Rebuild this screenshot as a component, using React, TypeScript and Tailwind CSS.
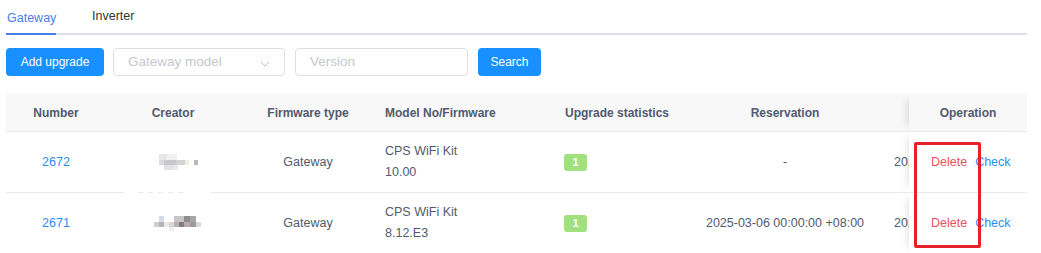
import React from 'react';

const font = { fontFamily: '"Liberation Sans", Arial, sans-serif' };

type Row = {
  id: string;
  model: string;
  firmware: string;
  reservation: string;
  mosaic: 'light' | 'dark';
};

const rows: Row[] = [
  { id: '2672', model: 'CPS WiFi Kit', firmware: '10.00', reservation: '-', mosaic: 'light' },
  { id: '2671', model: 'CPS WiFi Kit', firmware: '8.12.E3', reservation: '2025-03-06 00:00:00 +08:00', mosaic: 'dark' },
];

// blurred creator name, drawn as mosaic blocks
function Mosaic({ kind }: { kind: 'light' | 'dark' }) {
  if (kind === 'light') {
    return (
      <div className="flex flex-col gap-0">
        <div className="flex">
          <div className="w-[8px] h-[6px] bg-[#e6e6e8]" />
          <div className="w-[10px] h-[6px] bg-[#f1f1f1]" />
        </div>
        <div className="flex items-center">
          <div className="w-[5px] h-[5px] bg-[#dcdcdc]" />
          <div className="w-[12px] h-[5px] bg-[#c9c9cc]" />
          <div className="w-[9px] h-[5px] bg-[#d4d4d4]" />
          <div className="w-[4px] h-[5px] bg-[#f0ede4]" />
          <div className="w-[5px] h-[5px] bg-white" />
          <div className="w-[4px] h-[5px] bg-[#b8b8b8]" />
        </div>
        <div className="flex">
          <div className="w-[5px] h-[5px] bg-white" />
          <div className="w-[9px] h-[5px] bg-[#e2e2e4]" />
          <div className="w-[5px] h-[5px] bg-[#eaeaea]" />
        </div>
      </div>
    );
  }
  return (
    <div className="flex flex-col">
      <div className="flex">
        <div className="w-[5px] h-[6px] bg-white" />
        <div className="w-[5px] h-[6px] bg-[#d5dbe6]" />
        <div className="w-[10px] h-[6px] bg-white" />
        <div className="w-[10px] h-[6px] bg-[#c9c6c6]" />
        <div className="w-[6px] h-[6px] bg-[#8d8c93]" />
        <div className="w-[6px] h-[6px] bg-[#a8a5a8]" />
      </div>
      <div className="flex">
        <div className="w-[5px] h-[5px] bg-[#cfcfcf]" />
        <div className="w-[5px] h-[5px] bg-[#b4b4b4]" />
        <div className="w-[5px] h-[5px] bg-[#e9e9e9]" />
        <div className="w-[5px] h-[5px] bg-[#d8d4d0]" />
        <div className="w-[5px] h-[5px] bg-[#b7b3b3]" />
        <div className="w-[5px] h-[5px] bg-[#7f7e84]" />
        <div className="w-[6px] h-[5px] bg-[#b9aca8]" />
        <div className="w-[6px] h-[5px] bg-[#9c9a9f]" />
        <div className="w-[5px] h-[5px] bg-[#d9d9d9]" />
      </div>
      <div className="flex">
        <div className="w-[15px] h-[4px] bg-white" />
        <div className="w-[5px] h-[4px] bg-[#eeeeee]" />
      </div>
    </div>
  );
}

export default function App() {
  return (
    <div className="relative w-[1041px] h-[253px] bg-white overflow-hidden text-[#515a6e]" style={font}>
      <div className="pl-[6px] w-[1027px]">
        {/* Tabs */}
        <div className="flex items-end h-[35px] border-b-2 border-[#dde0ea]">
          <div className="w-[50px] h-[35px] -mb-[2px] border-b-2 border-[#4a7de8] text-[#4a7de8] text-[12.5px] pl-[1px] pt-[9px]">
            Gateway
          </div>
          <div className="ml-[36px] h-[35px] text-[12.5px] text-[#333] pt-[9px]">Inverter</div>
        </div>

        {/* Toolbar */}
        <div className="flex items-center mt-[13px] h-[28px]">
          <button className="w-[98px] h-[28px] rounded-[4px] bg-[#1890ff] text-white text-[12px]">
            Add upgrade
          </button>
          <div className="ml-[9px] w-[172px] h-[28px] rounded-[4px] border border-[#dcdee2] flex items-center justify-between pl-[14px] pr-[14px]">
            <span className="text-[13.5px] text-[#c5c8ce]">Gateway model</span>
            <svg width="10" height="6" viewBox="0 0 10 6" className="mt-[3px]">
              <path d="M1 1 L5 5 L9 1" fill="none" stroke="#b8bcc4" strokeWidth="1" />
            </svg>
          </div>
          <div className="ml-[10px] w-[173px] h-[28px] rounded-[4px] border border-[#dcdee2] flex items-center pl-[14px]">
            <span className="text-[13.5px] text-[#c5c8ce]">Version</span>
          </div>
          <button className="ml-[10px] w-[63px] h-[28px] rounded-[4px] bg-[#1890ff] text-white text-[12px]">
            Search
          </button>
        </div>

        {/* Table */}
        <div className="mt-[18px] w-[1021px] text-[12.5px]">
          <div className="flex h-[38px] bg-[#f8f8f9] border-b border-[#e8eaec] font-bold text-[12px] pt-[1px]">
            <div className="w-[100px] flex items-center justify-center">Number</div>
            <div className="w-[134px] flex items-center justify-center">Creator</div>
            <div className="w-[136px] flex items-center justify-center">Firmware type</div>
            <div className="w-[180px] flex items-center pl-[9px]">Model No/Firmware</div>
            <div className="w-[134px] flex items-center pl-[9px]">Upgrade statistics</div>
            <div className="w-[190px] flex items-center justify-center">Reservation</div>
            <div className="w-[29px]" />
            <div className="w-[118px] flex items-center justify-center bg-[#f8f8f9] shadow-[-7px_0_7px_-5px_rgba(0,0,0,0.12)]">
              Operation
            </div>
          </div>

          {rows.map((r, i) => (
            <div key={r.id} className="flex h-[61px] border-b border-[#e8eaec] relative">
              <div className="w-[100px] flex items-center justify-center text-[#2d8cf0]">{r.id}</div>
              <div className="w-[134px] flex items-center justify-center relative">
                <div className={i === 0 ? 'ml-[10px]' : 'ml-[8px]'}>
                  <Mosaic kind={r.mosaic} />
                </div>
                {i === 0 && (
                  <div className="absolute left-[18px] bottom-[-2px] flex gap-[5px]">
                    <div className="w-[14px] h-[4px] bg-white" />
                    <div className="w-[5px] h-[4px] bg-white" />
                    <div className="w-[5px] h-[4px] bg-white" />
                    <div className="w-[5px] h-[4px] bg-white" />
                    <div className="w-[5px] h-[4px] bg-white" />
                    <div className="w-[28px] h-[4px] bg-white" />
                  </div>
                )}
              </div>
              <div className="w-[136px] flex items-center justify-center">Gateway</div>
              <div className="w-[180px] flex flex-col justify-center pl-[9px] leading-[21px]">
                <span>{r.model}</span>
                <span>{r.firmware}</span>
              </div>
              <div className="w-[134px] flex items-center pl-[8px]">
                <span className="w-[23px] h-[17px] rounded-[3px] bg-[#a0e07e] text-white text-[11px] font-bold flex items-center justify-center">
                  1
                </span>
              </div>
              <div className="w-[190px] flex items-center justify-center">{r.reservation}</div>
              <div className="w-[29px] overflow-hidden whitespace-nowrap flex items-center pl-[14px]">
                2025-03-06 00:00:00 +08:00
              </div>
              <div className="w-[118px] flex items-center pl-[22px] gap-[8px] bg-white shadow-[-7px_0_7px_-5px_rgba(0,0,0,0.1)]">
                <span className="text-[#ed4f62]">Delete</span>
                <span className="text-[#2d8cf0]">Check</span>
              </div>
            </div>
          ))}
        </div>
      </div>

      {/* highlight box annotation */}
      <div className="absolute left-[914px] top-[142px] w-[67px] h-[106px] border-[3px] border-[#e8202a] rounded-[2px]" />
    </div>
  );
}
